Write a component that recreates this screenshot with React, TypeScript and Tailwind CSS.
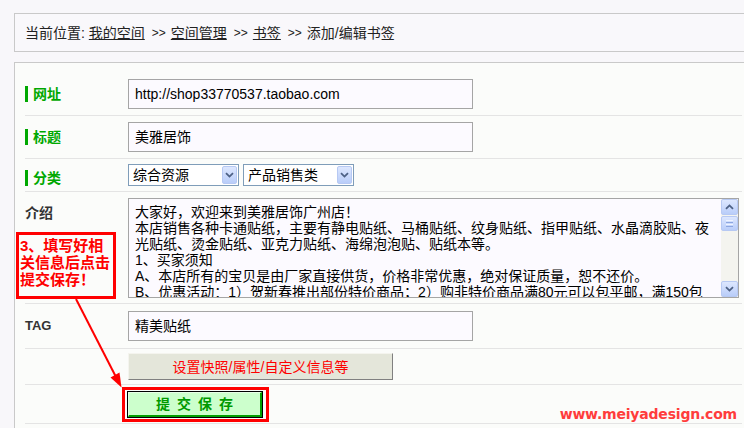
import React from "react";

const F = "font-['Liberation_Sans','Noto_Sans_CJK_SC',sans-serif]";

function Chevron({ up = false }: { up?: boolean }) {
  return (
    <svg width="9" height="6" viewBox="0 0 9 6" className={up ? "rotate-180" : ""}>
      <path d="M1 1.2 L4.5 4.6 L8 1.2" fill="none" stroke="#4d6185" strokeWidth="1.8" />
    </svg>
  );
}

function XpBtn({ className = "", children }: { className?: string; children?: React.ReactNode }) {
  return (
    <div
      className={`flex items-center justify-center rounded-[2px] border border-[#b7c9f3] bg-linear-to-b from-[#dde7fe] to-[#b9cdf9] ${className}`}
    >
      {children}
    </div>
  );
}

function Select({ text }: { text: string }) {
  return (
    <div className="w-[111px] h-[22px] border border-[#7f9db9] bg-white flex items-center justify-between pl-[4px] pr-[1px]">
      <span className="text-[14px] leading-[16px] text-black">{text}</span>
      <XpBtn className="w-[15px] h-[18px]">
        <Chevron />
      </XpBtn>
    </div>
  );
}

function Row({ className = "", children }: { className?: string; children?: React.ReactNode }) {
  return <div className={`flex border-b border-[#e4e4e4] ${className}`}>{children}</div>;
}

function GreenLabel({ text, className = "" }: { text: string; className?: string }) {
  return (
    <div className={`w-[103px] flex items-center ${className}`}>
      <div className="w-[3px] h-[16px] bg-[#00a800]" />
      <span className="ml-[5px] text-[14px] leading-[16px] font-bold text-[#00a800]">{text}</span>
    </div>
  );
}

function Sep() {
  return <span className="ml-[7px] mr-[5px] text-[12px]">&gt;&gt;</span>;
}

const lines = [
  "大家好，欢迎来到美雅居饰广州店！",
  "本店销售各种卡通贴纸，主要有静电贴纸、马桶贴纸、纹身贴纸、指甲贴纸、水晶滴胶贴、夜",
  "光贴纸、烫金贴纸、亚克力贴纸、海绵泡泡贴、贴纸本等。",
  "1、买家须知",
  "A、本店所有的宝贝是由厂家直接供货，价格非常优惠，绝对保证质量，恕不还价。",
  "B、优惠活动：1）贺新春推出部份特价商品；2）购非特价商品满80元可以包平邮，满150包",
];

export default function App() {
  return (
    <div className={`relative w-[744px] h-[428px] overflow-hidden bg-[#f8f7fa] ${F} text-[14px]`}>
      {/* breadcrumb */}
      <div className="ml-[14px] mt-[13px] w-[740px] h-[39px] border border-[#c9c9c9] bg-[#f9f8fb] flex items-center pl-[10px] text-[#222] leading-[16px] whitespace-pre">
        <span>当前位置: </span>
        <span className="underline">我的空间</span>
        <Sep />
        <span className="underline">空间管理</span>
        <Sep />
        <span className="underline">书签</span>
        <Sep />
        <span>添加/编辑书签</span>
      </div>

      {/* form */}
      <div className="ml-[14px] mt-[10px] w-[740px] h-[400px] border border-[#c9c9c9] bg-[#fbfcfa] pl-[10px] pr-[11px]">
        <Row className="pt-[16px] pb-[6px]">
          <GreenLabel text="网址" />
          <div className="w-[345px] h-[30px] border border-[#a5a5a5] bg-[#fcfaff] flex items-center pl-[6px] text-[14px] leading-[16px] text-black">
            http://shop33770537.taobao.com
          </div>
        </Row>
        <Row className="py-[6px]">
          <GreenLabel text="标题" />
          <div className="w-[345px] h-[30px] border border-[#a5a5a5] bg-[#fcfaff] flex items-center pl-[6px] text-[14px] leading-[16px] text-black">
            美雅居饰
          </div>
        </Row>
        <Row className="pt-[5px] pb-[5px]">
          <GreenLabel text="分类" className="pt-[6px]" />
          <div className="flex gap-[4px]">
            <Select text="综合资源" />
            <Select text="产品销售类" />
          </div>
        </Row>
        <Row className="pt-[6px] pb-[5px]">
          <div className="w-[103px] pt-[5px]">
            <span className="text-[14px] leading-[16px] font-bold text-[#333]">介绍</span>
          </div>
          <div className="w-[611px] h-[100px] border border-[#a5a5a5] bg-[#fcfaff] flex">
            <div className="flex-1 overflow-hidden pl-[6px] pt-[5px] text-[14px] leading-[16px] text-black">
              {lines.map((l, i) => (
                <div key={i} className="whitespace-nowrap">
                  {l}
                </div>
              ))}
            </div>
            <div className="w-[17px] h-full flex flex-col bg-[#f4f4ef]">
              <XpBtn className="w-[17px] h-[16px]">
                <Chevron up />
              </XpBtn>
              <XpBtn className="w-[17px] h-[15px] mt-[1px] flex-col gap-[1px]">
                <div className="w-[7px] h-[1px] bg-[#eef3ff]" />
                <div className="w-[7px] h-[1px] bg-[#8ca6e0]" />
                <div className="w-[7px] h-[1px] bg-[#eef3ff]" />
                <div className="w-[7px] h-[1px] bg-[#8ca6e0]" />
              </XpBtn>
              <div className="flex-1" />
              <XpBtn className="w-[17px] h-[16px]">
                <Chevron />
              </XpBtn>
            </div>
          </div>
        </Row>
        <Row className="py-[7px]">
          <div className="w-[103px] flex items-center">
            <span className="text-[13px] leading-[16px] font-bold text-[#333]">TAG</span>
          </div>
          <div className="w-[345px] h-[30px] border border-[#a5a5a5] bg-[#fcfaff] flex items-center pl-[6px] text-[14px] leading-[16px] text-black">
            精美贴纸
          </div>
        </Row>
        <Row className="py-[4px]">
          <div className="w-[103px]" />
          <div className="w-[265px] h-[27px] bg-[#e4e6da] border border-t-[#f4f4ee] border-l-[#f4f4ee] border-r-[#808080] border-b-[#808080] flex items-center justify-center text-[14px] leading-[16px] text-[#ff0000]">
            设置快照/属性/自定义信息等
          </div>
        </Row>
        <Row className="pt-[2px] pb-[1px]">
          <div className="w-[103px]" />
          <div className="-ml-[6px] w-[147px] h-[35px] border-[3px] border-[#ff0000] pl-[2px] pt-[1px]">
            <div className="w-[136px] h-[27px] border border-black">
              <div className="w-full h-full bg-[#ccffcc] border-b-2 border-r-2 border-[#00a000] border-t border-l border-t-[#e8ffe8] border-l-[#e8ffe8] flex items-center justify-center gap-[7px] text-[14px] leading-[16px] font-bold text-[#009900]">
                <span>提</span>
                <span>交</span>
                <span>保</span>
                <span>存</span>
              </div>
            </div>
          </div>
        </Row>
      </div>

      {/* annotation box */}
      <div className="absolute left-[16px] top-[232px] w-[100px] h-[67px] border-[3px] border-[#ff0000] bg-[#fbfcfa] pl-[1px] pt-[2px] text-[15px] leading-[17px] font-bold text-[#ff0000]">
        <div className="whitespace-nowrap">3、填写好相</div>
        <div className="whitespace-nowrap">关信息后点击</div>
        <div className="whitespace-nowrap">提交保存！</div>
      </div>

      {/* arrow */}
      <svg className="absolute left-0 top-0 pointer-events-none" width="744" height="428">
        <line x1="76" y1="299" x2="116" y2="377" stroke="#ff0000" strokeWidth="2" />
        <polygon points="121.5,387.5 110.5,377.5 119.5,372.5" fill="#ff0000" />
      </svg>

      {/* watermark */}
      <div className="absolute right-[7px] top-[405px] font-['DejaVu_Sans',sans-serif] font-bold text-[14px] leading-[18px] tracking-[-0.2px] text-[#ff3c3c]">
        www.meiyadesign.com
      </div>
    </div>
  );
}
